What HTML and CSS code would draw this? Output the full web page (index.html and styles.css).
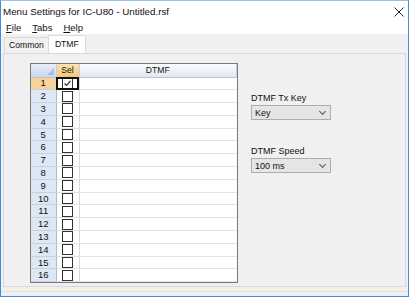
FILE: index.html
```html
<!DOCTYPE html>
<html lang="en">
<head>
    <meta charset="UTF-8">
    <title>Menu Settings for IC-U80 - Untitled.rsf</title>
    <link rel="stylesheet" href="styles.css">
</head>
<body>
    <div class="window">
        <div class="titlebar">
            <span class="title">Menu Settings for IC-U80 - Untitled.rsf</span>
            <svg class="close" width="10" height="10" viewBox="0 0 10 10">
                <path d="M0.5 0.5 L9.5 9.5 M9.5 0.5 L0.5 9.5" stroke="#222" stroke-width="1" />
            </svg>
        </div>
        <div class="menubar">
            <span class="menu"><u>F</u>ile</span>
            <span class="menu"><u>T</u>abs</span>
            <span class="menu"><u>H</u>elp</span>
        </div>
        <div class="tabs">
            <span class="tab">Common</span>
            <span class="tab active">DTMF</span>
        </div>
        <div class="panel">
            <div class="gridwrap">
                <table class="grid" cellspacing="0">
                    <thead>
                        <tr>
                            <th class="corner"><span class="tri"></span></th>
                            <th class="selhead">Sel</th>
                            <th class="dtmfhead">DTMF</th>
                        </tr>
                    </thead>
                    <tbody id="rows"></tbody>
                </table>
            </div>
            <div class="side">
                <label class="lbl">DTMF Tx Key</label>
                <div class="combo"><span>Key</span><span class="chev"></span></div>
                <label class="lbl second">DTMF Speed</label>
                <div class="combo"><span>100 ms</span><span class="chev"></span></div>
            </div>
        </div>
        <div class="footer"></div>
    </div>

    <script>
let rows = "";
for (let i = 1; i <= 16; i++) {
  let cur = i == 1 ? " current" : "";
  let chk = i == 1 ? '<svg width="9" height="9" viewBox="0 0 9 9"><path d="M1.5 4.5 L3.5 6.5 L7.5 2" fill="none" stroke="#333" stroke-width="1.2"/></svg>' : "";
  rows += `<tr class="${cur}">
    <td class="rowhead">${i}</td>
    <td class="sel"><span class="box">${chk}</span></td>
    <td class="dtmf"></td>
  </tr>`;
}
document.getElementById("rows").innerHTML = rows;
    </script>
</body>
</html>
```

FILE: styles.css
```css
* {
  margin: 0px;
  padding: 0px;
  box-sizing: border-box;
}

body {
  width: 409px;
  height: 297px;
  overflow: hidden;
  font-family: "Liberation Sans", Arial, sans-serif;
  font-size: 8.6px;
  color: #111;
}

.window {
  width: 409px;
  height: 297px;
  background-color: #f0f0f0;
  border: 1px solid #3d8ee0;
  border-top-color: #9cc1ea;
  display: flex;
  flex-direction: column;
}

.titlebar {
  height: 20px;
  background-color: #fff;
  display: flex;
  align-items: center;
  justify-content: space-between;
  padding-left: 2px;
  padding-right: 4px;
  font-size: 9.8px;
}

.close {
  margin-top: 1px;
}

.menubar {
  height: 14px;
  background-color: #fff;
  display: flex;
  align-items: center;
  padding-left: 5px;
  gap: 11px;
  font-size: 9.5px;
  border-bottom: 1px solid #f4f4f4;
}

.tabs {
  height: 18px;
  display: flex;
  align-items: flex-end;
  padding-left: 3px;
}

.tab {
  height: 16px;
  padding: 0 4px;
  line-height: 15px;
  border: 1px solid #dadada;
  border-bottom: none;
  background-color: #f0f0f0;
}

.tab.active {
  height: 18px;
  background-color: #fff;
  line-height: 16px;
  padding: 0 6px;
  margin-left: -1px;
}

.panel {
  height: 234px;
  margin-left: 2px;
  margin-right: 2px;
  border: 1px solid #d9d9d9;
  display: flex;
  align-items: flex-start;
}

.gridwrap {
  margin-left: 26px;
  margin-top: 9px;
  width: 208px;
  border: 1px solid #7a7a7a;
  background-color: #fff;
}

.grid {
  width: 100%;
  border-collapse: collapse;
  table-layout: fixed;
}

.grid th {
  height: 13px;
  font-weight: normal;
  line-height: 11px;
  padding: 0;
  border-right: 1px solid #c6cfdc;
  border-bottom: 1px solid #b7c2d2;
}

.corner {
  width: 25px;
  background: linear-gradient(#e7eef8, #c9d8ee);
  position: relative;
}

.tri {
  position: absolute;
  right: 2px;
  bottom: 2px;
  width: 0;
  height: 0;
  border-left: 7px solid transparent;
  border-bottom: 7px solid #a9bfdf;
}

.selhead {
  width: 23px;
  background: linear-gradient(#fbe3b4, #f5c67a);
}

.dtmfhead {
  background: linear-gradient(#fafbfd, #e1e8f3);
}

.grid td {
  height: 12.8px;
  padding: 0;
  line-height: 10px;
  border-bottom: 1px solid #e4e4e4;
}

.rowhead {
  text-align: center;
  font-size: 9.5px;
  background-color: #dee7f4;
  border-right: 1px solid #aebbd0;
  border-bottom: 1px solid #c6d1e2 !important;
}

.current .rowhead {
  background-color: #f8d29a;
}

.sel {
  border-right: 1px solid #d8d8d8;
  text-align: center;
}

.current .sel {
  outline: 2px solid #111;
  outline-offset: -2px;
}

.box {
  display: inline-block;
  width: 11px;
  height: 11px;
  border: 1px solid #333;
  background-color: #fff;
  vertical-align: middle;
  margin-top: -1px;
}

.box svg {
  display: block;
}

.side {
  margin-left: 13px;
  margin-top: 37px;
  display: flex;
  flex-direction: column;
  width: 80px;
}

.lbl {
  height: 14px;
  line-height: 14px;
  font-size: 9px;
}

.lbl.second {
  margin-top: 24px;
}

.combo {
  height: 15px;
  border: 1px solid #adadad;
  background-color: #e5e5e5;
  display: flex;
  align-items: center;
  justify-content: space-between;
  padding-left: 3px;
  padding-right: 5px;
  font-size: 9px;
}

.chev {
  width: 5px;
  height: 5px;
  border-right: 1px solid #555;
  border-bottom: 1px solid #555;
  transform: rotate(45deg);
  margin-top: -3px;
}

.footer {
  flex: 1;
  border-top: 4px solid #f0f0f0;
}

.footer::after {
  content: "";
  display: block;
  height: 1px;
  background-color: #e8e6d4;
}
```
